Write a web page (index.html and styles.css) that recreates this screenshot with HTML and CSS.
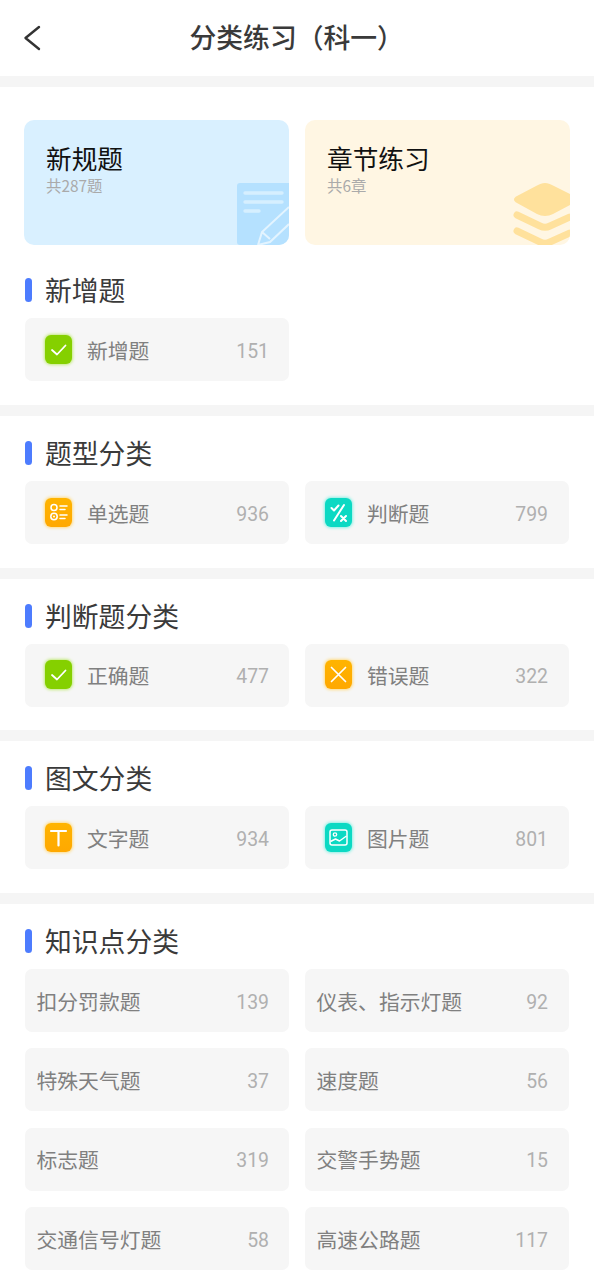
FILE: index.html
```html
<!DOCTYPE html>
<html lang="zh-CN">
<head>
<meta charset="utf-8">
<title>分类练习（科一）</title>
<link rel="stylesheet" href="styles.css">
</head>
<body>
<header class="topbar">
  <svg class="back" viewBox="0 0 20 26" width="20" height="26"><path d="M17 2 L3.500 13 L17 24" fill="none" stroke="#333" stroke-width="2.400" stroke-linecap="round" stroke-linejoin="round"/></svg>
  <h1 class="page-title">分类练习（科一）</h1>
</header>

<section class="band first">
  <div class="hero-row">
    <div class="hero blue">
      <div class="hero-name">新规题</div>
      <div class="hero-sub">共287题</div>
      <svg class="hero-art" width="52" height="62" viewBox="0 0 52 62">
        <path d="M3 0H52V62H3A3 3 0 0 1 0 59V3A3 3 0 0 1 3 0Z" fill="#b5e1ff"/>
        <path d="M8 10H45M8 19H45M8 28H22" stroke="#d6efff" stroke-width="3.400" stroke-linecap="round" fill="none"/>
        <path d="M52 24 L25 49 L21 62 M52 41 L33 59 L21 62 M25 49 L33 56" stroke="#e3f4ff" stroke-width="2" fill="none"/>
      </svg>
    </div>
    <div class="hero cream">
      <div class="hero-name">章节练习</div>
      <div class="hero-sub">共6章</div>
      <svg class="hero-art" width="57" height="62" viewBox="0 0 57 62">
        <path d="M32 0 C35 0 37 1 40 2.500 L57 11 V22 L40 31 C35 33.500 29 33.500 24 31 L4 20 C0 18 0 15 4 13 L24 2.500 C27 1 29 0 32 0Z" fill="#ffe19c"/>
        <path d="M4 32 L27 43 C30 44.500 34 44.500 37 43 L57 34 M4 48 L27 59 C30 60.500 34 60.500 37 59 L57 50" fill="none" stroke="#ffe19c" stroke-width="7" stroke-linecap="round"/>
      </svg>
    </div>
  </div>
  <h2 class="sec-title">新增题</h2>
  <div class="grid">
    <div class="item">
      <span class="ico green"><svg viewBox="0 0 27 29"><path d="M7 15 L12 19.500 L20.500 10.500" fill="none" stroke="#fff" stroke-width="1.800" stroke-linecap="round" stroke-linejoin="round"/></svg></span>
      <span class="label">新增题</span><span class="num">151</span>
    </div>
  </div>
</section>

<section class="band">
  <h2 class="sec-title">题型分类</h2>
  <div class="grid">
    <div class="item">
      <span class="ico orange"><svg viewBox="0 0 27 29"><circle cx="9" cy="9.500" r="3" fill="none" stroke="#fff" stroke-width="1.500"/><circle cx="9" cy="18.500" r="3.200" fill="none" stroke="#fff" stroke-width="1.500"/><circle cx="9" cy="18.500" r="1" fill="#fff"/><path d="M15 8H22M15 11.500H20M15 17H22M15 20.500H20" stroke="#fff" stroke-width="1.500" stroke-linecap="round"/></svg></span>
      <span class="label">单选题</span><span class="num">936</span>
    </div>
    <div class="item">
      <span class="ico teal"><svg viewBox="0 0 27 29"><path d="M6.500 10 L9 12.500 L13.500 7.500M19 7 L9 22.500M16 18 L21 23M21 18 L16 23" fill="none" stroke="#fff" stroke-width="2" stroke-linecap="round" stroke-linejoin="round"/></svg></span>
      <span class="label">判断题</span><span class="num">799</span>
    </div>
  </div>
</section>

<section class="band">
  <h2 class="sec-title">判断题分类</h2>
  <div class="grid">
    <div class="item">
      <span class="ico green"><svg viewBox="0 0 27 29"><path d="M7 15 L12 19.500 L20.500 10.500" fill="none" stroke="#fff" stroke-width="1.800" stroke-linecap="round" stroke-linejoin="round"/></svg></span>
      <span class="label">正确题</span><span class="num">477</span>
    </div>
    <div class="item">
      <span class="ico orange"><svg viewBox="0 0 27 29"><path d="M6.500 7.500 L20.500 21.500M20.500 7.500 L6.500 21.500" fill="none" stroke="#fff" stroke-width="1.700" stroke-linecap="round"/></svg></span>
      <span class="label">错误题</span><span class="num">322</span>
    </div>
  </div>
</section>

<section class="band">
  <h2 class="sec-title">图文分类</h2>
  <div class="grid">
    <div class="item">
      <span class="ico orange"><svg viewBox="0 0 27 29"><path d="M6 8H21M13.500 8V22.500" fill="none" stroke="#fff" stroke-width="2.200" stroke-linecap="round"/></svg></span>
      <span class="label">文字题</span><span class="num">934</span>
    </div>
    <div class="item">
      <span class="ico teal"><svg viewBox="0 0 27 29"><rect x="5" y="7" width="17" height="15" rx="2" fill="none" stroke="#fff" stroke-width="1.500"/><circle cx="10" cy="11.500" r="1.700" fill="none" stroke="#fff" stroke-width="1.300"/><path d="M5.500 18.500 L10.500 16 L14.500 18 L21.500 13" fill="none" stroke="#fff" stroke-width="1.400" stroke-linejoin="round"/></svg></span>
      <span class="label">图片题</span><span class="num">801</span>
    </div>
  </div>
</section>

<section class="band last">
  <h2 class="sec-title">知识点分类</h2>
  <div class="grid">
    <div class="item plain"><span class="label">扣分罚款题</span><span class="num">139</span></div>
    <div class="item plain"><span class="label">仪表、指示灯题</span><span class="num">92</span></div>
    <div class="item plain"><span class="label">特殊天气题</span><span class="num">37</span></div>
    <div class="item plain"><span class="label">速度题</span><span class="num">56</span></div>
    <div class="item plain"><span class="label">标志题</span><span class="num">319</span></div>
    <div class="item plain"><span class="label">交警手势题</span><span class="num">15</span></div>
    <div class="item plain"><span class="label">交通信号灯题</span><span class="num">58</span></div>
    <div class="item plain"><span class="label">高速公路题</span><span class="num">117</span></div>
  </div>
</section>
</body>
</html>
```

FILE: styles.css
```css
* { box-sizing: border-box; }
html, body { margin: 0; padding: 0; }
body {
  width: 594px;
  height: 1280px;
  overflow: hidden;
  background: #f5f5f5;
  font-family: "Noto Sans CJK SC", "Roboto", sans-serif;
  color: #333;
}
.topbar {
  position: relative;
  height: 76px;
  background: #fff;
  display: flex;
  align-items: center;
  margin-bottom: 11px;
}
.back { position: absolute; left: 22px; top: 25px; }
.page-title {
  margin: 0 0 2px 189.500px;
  font-size: 26.800px;
  line-height: 74px;
  font-weight: 500;
  color: #3a3a3a;
}
.band {
  background: #fff;
  padding: 19px 25px 0;
  margin-bottom: 11px;
  height: 151.700px;
}
.band.first { padding-top: 33px; height: 318px; }
.band.last { height: 376px; margin-bottom: 0; }
.hero-row {
  display: grid;
  grid-template-columns: 265px 265px;
  gap: 16px;
  margin: 0 -1px 27px;
  width: 546px;
}
.hero {
  position: relative;
  height: 125px;
  border-radius: 10px;
  overflow: hidden;
  padding: 20px 22px 0;
}
.hero.blue { background: #d9f0ff; }
.hero.cream { background: #fff6e3; }
.hero-name {
  font-size: 25.700px;
  line-height: 36px;
  color: #111;
}
.hero-sub {
  font-size: 15.400px;
  line-height: 18px;
  color: #aaa;
}
.hero-art { position: absolute; right: 0; bottom: 0; display: block; }
.sec-title {
  position: relative;
  margin: 0 0 8px;
  padding-left: 20px;
  font-size: 26.800px;
  font-weight: 400;
  line-height: 36px;
  height: 38px;
  color: #3a3a3a;
}
.sec-title::before {
  content: "";
  position: absolute;
  left: 0;
  top: 6px;
  width: 7px;
  height: 24px;
  border-radius: 4px;
  background: #4d7cfe;
}
.grid {
  display: grid;
  grid-template-columns: 264px 264px;
  column-gap: 16px;
  row-gap: 16.400px;
}
.item {
  height: 63px;
  border-radius: 7px;
  background: #f6f6f6;
  display: flex;
  align-items: center;
  padding: 0 20px;
}
.item:nth-child(even) { padding-right: 21px; }
.item.plain { padding-left: 11.500px; }
.ico {
  flex: none;
  width: 27px;
  height: 32px;
  padding: 1px 0;
  margin-right: 15px;
  display: block;
}
.ico svg {
  display: block;
  width: 27px;
  height: 29px;
  border-radius: 6px;
}
.ico.green svg { background: #85d000; box-shadow: 0 0 3px 1px #c3ea7d; }
.ico.orange svg { background: linear-gradient(#ffb400, #ffa800); box-shadow: 0 0 3px 1px #ffdc85; }
.ico.teal svg { background: #0cd9c3; box-shadow: 0 0 3px 1px #8af0e5; }
.label {
  flex: 1;
  font-size: 20.800px;
  color: #808080;
  white-space: nowrap;
}
.num {
  font-family: "Roboto", sans-serif;
  font-size: 19.400px;
  font-weight: 400;
  padding-top: 3px;
  color: #b0b0b0;
}
```
